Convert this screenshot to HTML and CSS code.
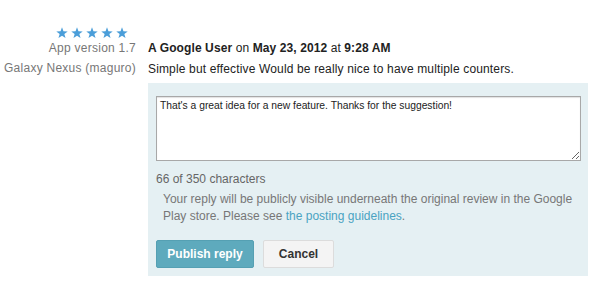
FILE: index.html
```html
<!DOCTYPE html>
<html>
<head>
<meta charset="utf-8">
<link rel="stylesheet" href="styles.css">
</head>
<body>
<div class="review">
  <div class="meta">
    <div class="stars">
      <svg viewBox="0 0 72 12" width="72" height="12">
        <g fill="#4b9ed9">
          <path id="s" d="M6 0.3 L7.45 4.3 L11.7 4.4 L8.35 7.0 L9.55 11.1 L6 8.7 L2.45 11.1 L3.65 7.0 L0.3 4.4 L4.55 4.3 Z"/>
          <use href="#s" x="15"/>
          <use href="#s" x="30"/>
          <use href="#s" x="45"/>
          <use href="#s" x="60"/>
        </g>
      </svg>
    </div>
    <div class="meta-line">App version 1.7</div>
    <div class="meta-line">Galaxy Nexus (maguro)</div>
  </div>
  <div class="main">
    <div class="author"><b>A Google User</b> on <b>May 23, 2012</b> at <b>9:28 AM</b></div>
    <div class="text">Simple but effective Would be really nice to have multiple counters.</div>
    <div class="reply">
      <textarea class="reply-box">That's a great idea for a new feature. Thanks for the suggestion!</textarea>
      <div class="counter">66 of 350 characters</div>
      <div class="notice">Your reply will be publicly visible underneath the original review in the Google Play store. Please see <a href="#" class="link">the posting guidelines</a>.</div>
      <div class="actions">
        <button class="btn btn-primary">Publish reply</button>
        <button class="btn btn-cancel">Cancel</button>
      </div>
    </div>
  </div>
</div>
</body>
</html>
```
FILE: styles.css
```css
* { box-sizing: border-box; }
html, body {
  margin: 0;
  padding: 0;
  background: #fff;
  font-family: "Liberation Sans", Arial, Helvetica, sans-serif;
  font-size: 12px;
  color: #222;
}
.review {
  display: flex;
  gap: 12px;
}
.meta {
  width: 136px;
  text-align: right;
  color: #777;
  padding-top: 27px;
}
.stars {
  height: 11px;
  display: flex;
  justify-content: flex-end;
  padding-right: 8px;
}
.stars svg { display: block; }
.meta-line {
  line-height: 20px;
  white-space: nowrap;
  letter-spacing: 0.25px;
}
.main {
  width: 440px;
  padding-top: 38px;
}
.author, .text {
  line-height: 20px;
  white-space: nowrap;
}
.author { color: #222; letter-spacing: 0.1px; }
.text { margin-top: 1px; letter-spacing: 0.15px; }
.reply {
  margin-top: 4px;
  background: #e5f0f3;
  padding: 13px 7px 8px 8px;
}
.reply-box {
  display: block;
  width: 425px;
  height: 65px;
  border: 1px solid #a8a8a8;
  box-shadow: inset 0 1px 1px rgba(0,0,0,0.12);
  background: #fff;
  font-family: "Liberation Sans", Arial, sans-serif;
  font-size: 10.3px;
  color: #222;
  padding: 3px 3px;
  margin: 0;
  resize: both;
  outline: none;
}
.counter {
  margin-top: 10px;
  line-height: 16px;
  color: #666;
}
.notice {
  margin-top: 4px;
  padding: 0 2px 0 7px;
  line-height: 17px;
  color: #777;
}
.link {
  color: #4aa3c2;
  text-decoration: none;
}
.actions {
  margin-top: 15px;
  display: flex;
  gap: 9px;
}
.btn {
  height: 28px;
  font-family: "Liberation Sans", Arial, sans-serif;
  font-size: 12px;
  font-weight: bold;
  border-radius: 2px;
  padding: 0;
  cursor: pointer;
}
.btn-primary {
  width: 98px;
  background: #5eaabd;
  border: 1px solid #55a0b3;
  color: #fff;
}
.btn-cancel {
  width: 71px;
  background: #f4f4f4;
  border: 1px solid #dcdcdc;
  color: #333;
}
```
